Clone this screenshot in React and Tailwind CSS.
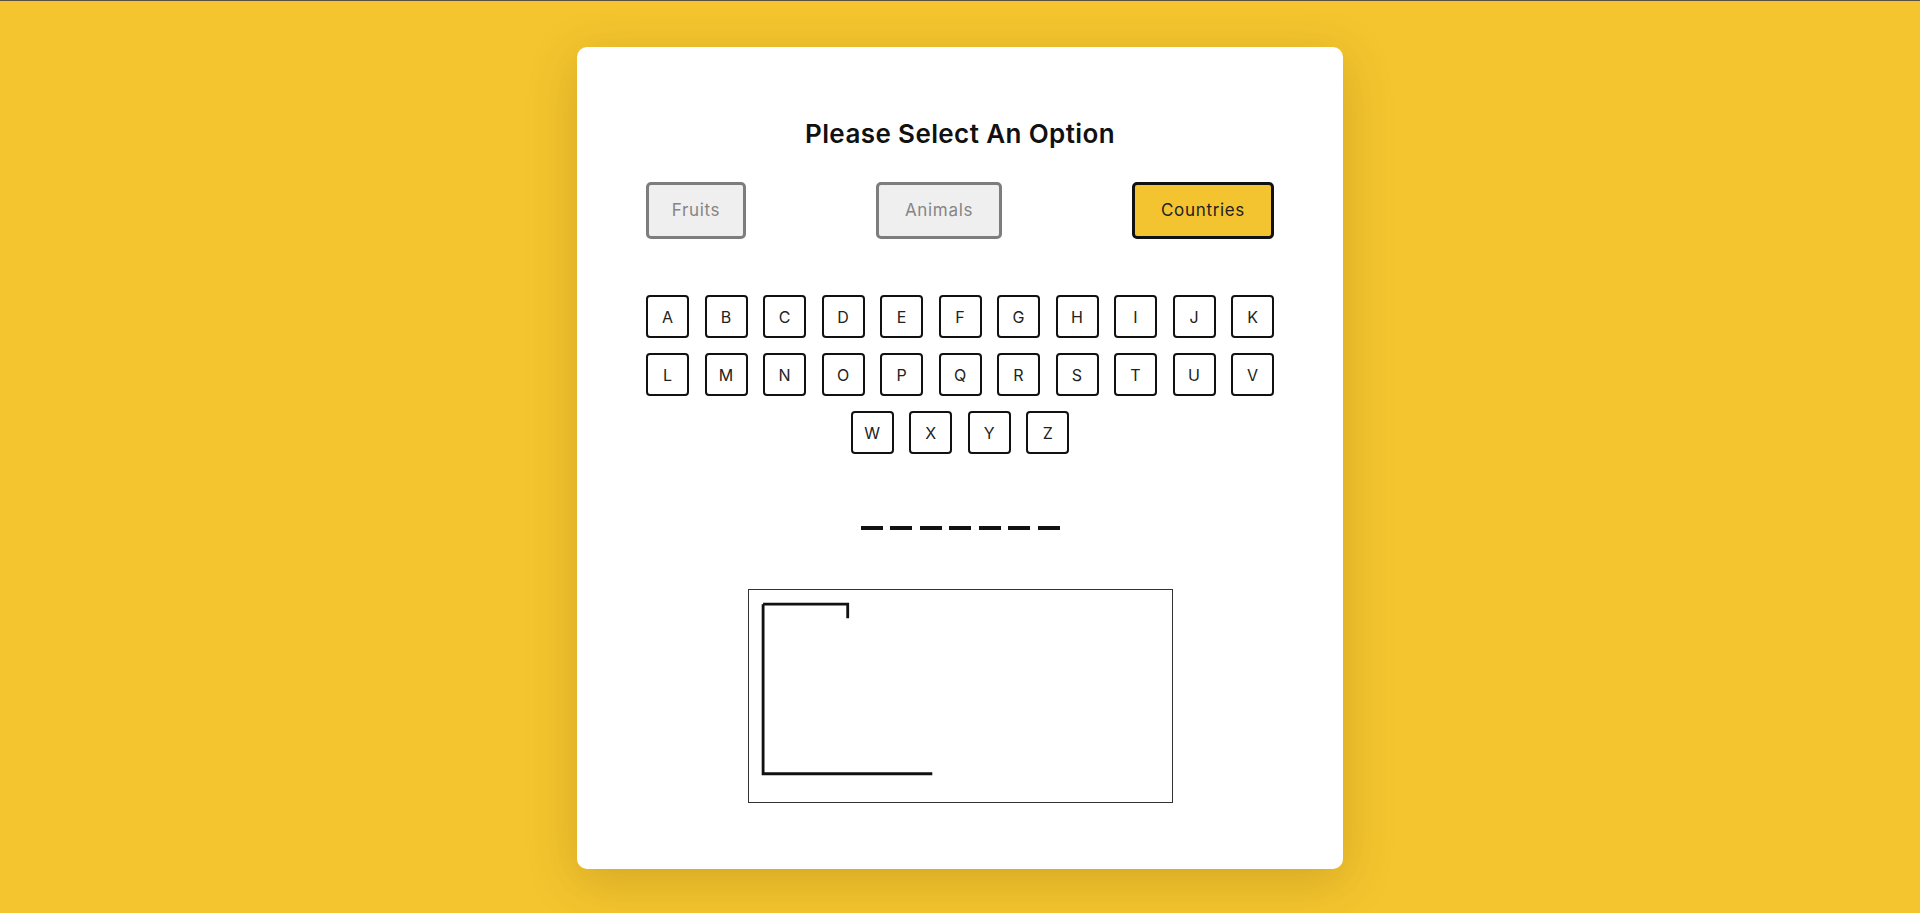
import React from "react";

const rows = [
  ["A", "B", "C", "D", "E", "F", "G", "H", "I", "J", "K"],
  ["L", "M", "N", "O", "P", "Q", "R", "S", "T", "U", "V"],
  ["W", "X", "Y", "Z"],
];

export default function App() {
  return (
    <div
      className="min-h-[913px] w-full bg-[#f4c52e] flex flex-col items-center"
      style={{ fontFamily: "Inter, 'Noto Sans', sans-serif" }}
    >
      <div className="h-[1px] w-full bg-[#5a5142]" />
      <div className="mt-[46px] w-[766px] rounded-[10px] bg-white shadow-[0_12px_50px_rgba(90,60,0,0.22)] flex flex-col items-center pt-[69px] pb-[66px]">
        <h1 className="h-[36px] text-[26px] leading-[36px] tracking-[0.015em] font-semibold text-[#111]">
          Please Select An Option
        </h1>
        <div className="mt-[30px] w-[628px] flex justify-between">
          <button className="w-[100px] h-[57px] rounded-[5px] border-[3px] border-[#7d7d7d] bg-[#efefef] text-[17px] tracking-[0.04em] text-[#858585]">
            Fruits
          </button>
          <button className="w-[126px] h-[57px] rounded-[5px] border-[3px] border-[#7d7d7d] bg-[#efefef] text-[17px] tracking-[0.04em] text-[#858585]">
            Animals
          </button>
          <button className="w-[142px] h-[57px] rounded-[5px] border-[3px] border-[#111] bg-[#f4c430] text-[17px] tracking-[0.04em] text-[#222]">
            Countries
          </button>
        </div>
        <div className="mt-[56px] flex flex-col items-center gap-[15px]">
          {rows.map((row, i) => (
            <div key={i} className="flex gap-[15.5px]">
              {row.map((l) => (
                <button
                  key={l}
                  className="w-[43px] h-[43px] rounded-[4px] border-2 border-[#111] bg-white text-[16px] text-[#222] flex items-center justify-center"
                >
                  {l}
                </button>
              ))}
            </div>
          ))}
        </div>
        <div className="mt-[72px] flex gap-[7.5px]">
          {Array.from({ length: 7 }).map((_, i) => (
            <div key={i} className="w-[22px] h-[4px] bg-[#111]" />
          ))}
        </div>
        <div className="mt-[59px] w-[425px] h-[214px] border border-[#333]">
          <svg
            className="w-full h-full block"
            viewBox="0 0 300 150"
            preserveAspectRatio="none"
          >
            <path
              d="M10 10 H70 V20 M10 10 V130 H130"
              fill="none"
              stroke="#111"
              strokeWidth="2"
            />
          </svg>
        </div>
      </div>
    </div>
  );
}
